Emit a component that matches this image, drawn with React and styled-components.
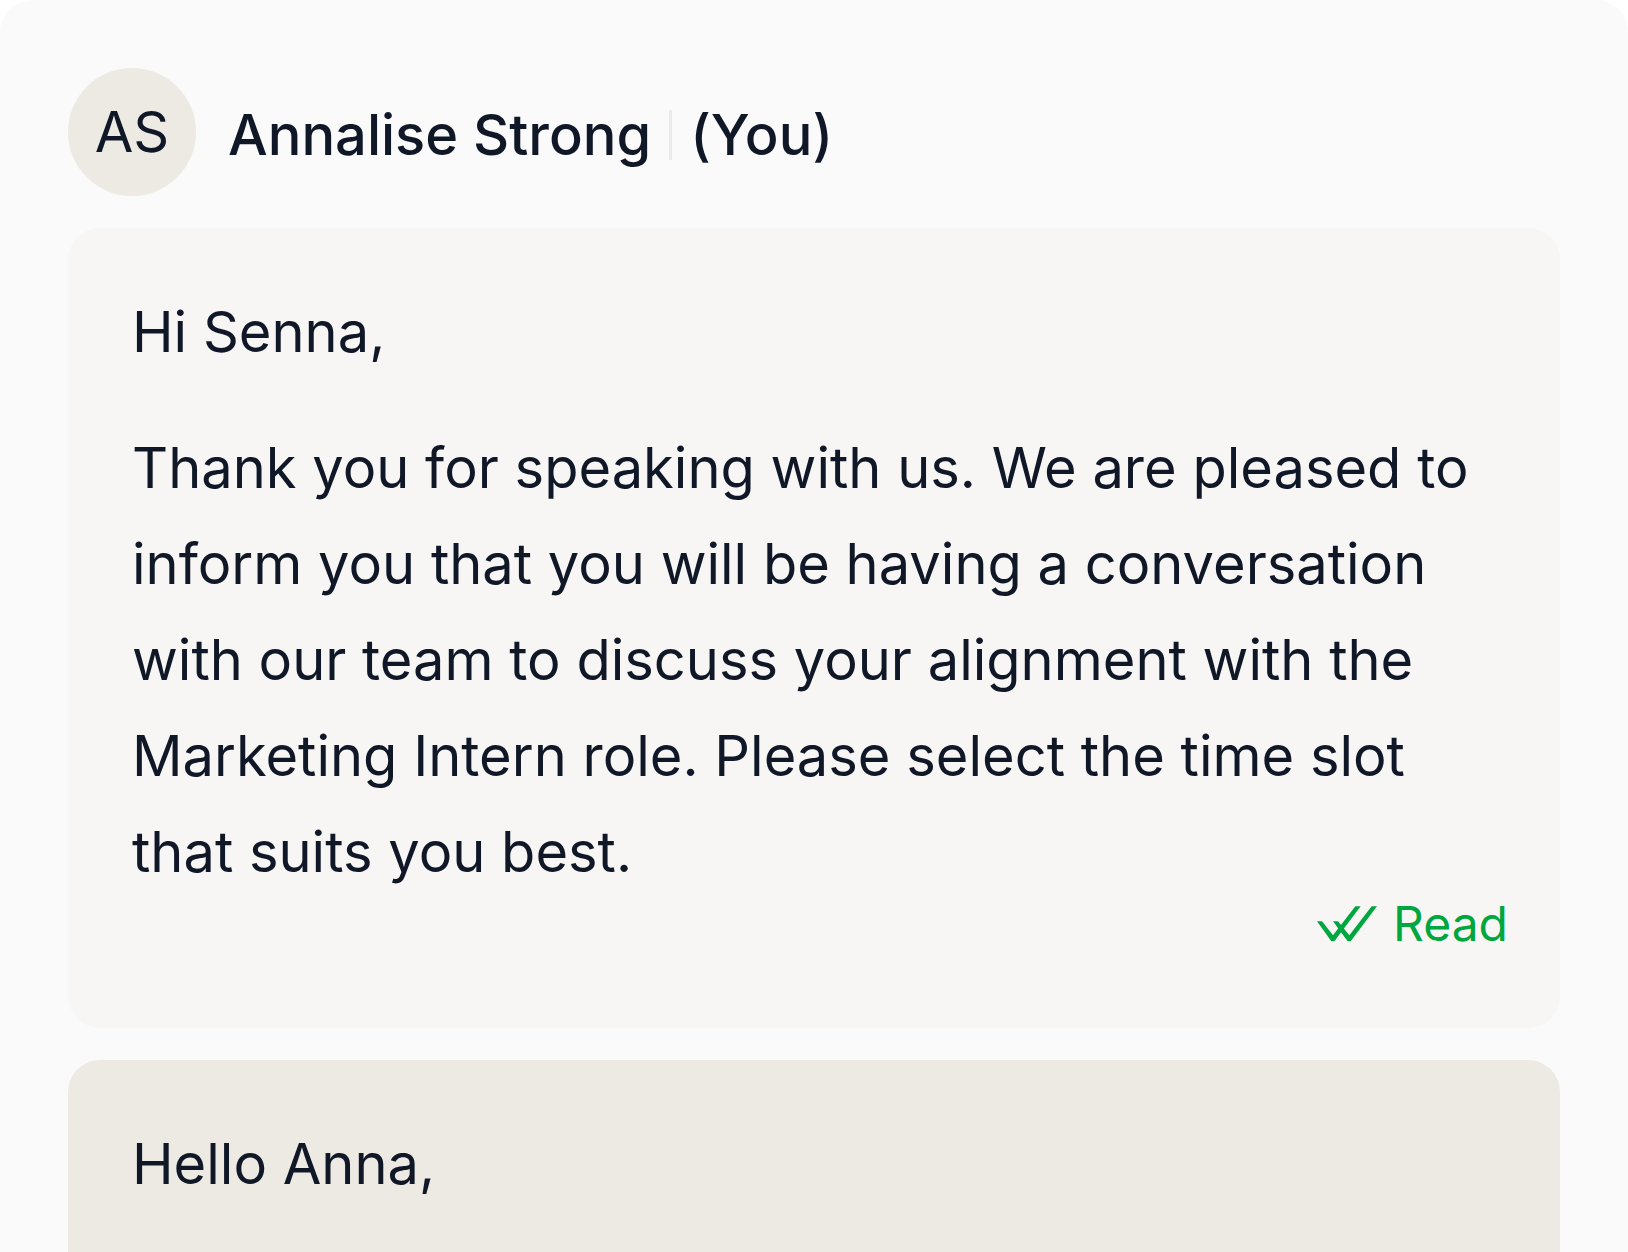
// App.jsx

import React from 'react';
import styled, { createGlobalStyle } from 'styled-components';

const GlobalStyle = createGlobalStyle`
  * {
    box-sizing: border-box;
  }

  body {
    margin: 0;
    background-color: #ffffff;
    color: #101828;
    font-family: Inter, 'Liberation Sans', sans-serif;
    font-size: 56px;
    line-height: 96px;
  }
`;

const ChatPanel = styled.main`
  display: flex;
  flex-direction: column;
  gap: 32px;
  min-height: 100vh;
  padding: 68px 68px 0;
  background-color: #fafafa;
  border-radius: 32px 32px 0 0;
`;

const SenderHeader = styled.header`
  display: flex;
  gap: 32px;
`;

const Avatar = styled.div`
  display: flex;
  align-items: center;
  justify-content: center;
  flex-shrink: 0;
  width: 128px;
  height: 128px;
  background-color: #edeae3;
  border-radius: 50%;
`;

const SenderName = styled.h1`
  display: flex;
  align-items: center;
  gap: 18px;
  margin: 0;
  padding-top: 6px;
  font-size: 56px;
  font-weight: 500;
`;

const Divider = styled.span`
  width: 3px;
  height: 50px;
  background-color: #ebebeb;
`;

const Message = styled.article`
  flex-grow: ${({ $open }) => ($open ? 1 : 0)};
  padding: ${({ $open }) => ($open ? '56px 64px 0' : '56px 64px 80px')};
  background-color: ${({ $reply }) => ($reply ? '#edeae3' : '#f7f6f4')};
  border-radius: ${({ $open }) => ($open ? '32px 32px 0 0' : '32px')};

  p {
    margin: 0;
  }

  p + p {
    margin-top: 40px;
  }
`;

const ReadStatus = styled.div`
  display: flex;
  align-items: center;
  justify-content: flex-end;
  gap: 16px;
  margin-right: -12px;
  color: #00a63e;
  font-size: 48px;
  line-height: 48px;

  svg {
    width: 60px;
    height: 36px;
  }
`;

function DoubleCheckIcon() {
  return (
    <svg viewBox="0 0 180 108" fill="currentColor" aria-hidden="true">
      <path d="M0 46H15L48 88L115 1H131L52 106H43Z" />
      <path d="M48 46H63L97 88L164 1H180L101 106H92Z" />
    </svg>
  );
}

function App() {
  return (
    <>
      <GlobalStyle />
      <ChatPanel>
        <SenderHeader>
          <Avatar>AS</Avatar>
          <SenderName>
            <span>Annalise Strong</span>
            <Divider />
            <span>(You)</span>
          </SenderName>
        </SenderHeader>
        <Message>
          <p>Hi Senna,</p>
          <p>
            Thank you for speaking with us. We are pleased to inform you that you will be having a
            conversation with our team to discuss your alignment with the Marketing Intern role.
            Please select the time slot that suits you best.
          </p>
          <ReadStatus>
            <DoubleCheckIcon />
            <span>Read</span>
          </ReadStatus>
        </Message>
        <Message $reply $open>
          <p>Hello Anna,</p>
        </Message>
      </ChatPanel>
    </>
  );
}

export default App;
